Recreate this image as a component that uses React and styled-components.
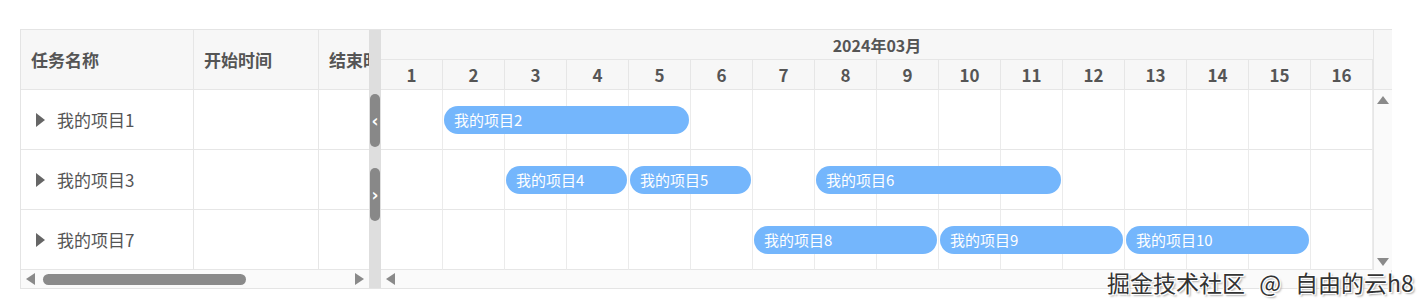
import React from "react";
import styled, { createGlobalStyle } from "styled-components";

const DAY_W = 62;
const DAYS = Array.from({ length: 16 }, (_, i) => i + 1);

const rows = [
    {
        name: "我的项目1",
        bars: [{ title: "我的项目2", start: 2, end: 5 }],
    },
    {
        name: "我的项目3",
        bars: [
            { title: "我的项目4", start: 3, end: 4 },
            { title: "我的项目5", start: 5, end: 6 },
            { title: "我的项目6", start: 8, end: 11 },
        ],
    },
    {
        name: "我的项目7",
        bars: [
            { title: "我的项目8", start: 7, end: 9 },
            { title: "我的项目9", start: 10, end: 12 },
            { title: "我的项目10", start: 13, end: 15 },
        ],
    },
];

const GlobalStyle = createGlobalStyle`
    body {
        margin: 0;
        background: #ffffff;
        font-family: "Noto Sans CJK SC", "Noto Sans", sans-serif;
    }
`;

export default function App() {
    return (
        <>
            <GlobalStyle />
            <Page>
                <Gantt>
                    <TablePanel>
                        <TableGrid>
                            <HeadCell>任务名称</HeadCell>
                            <HeadCell>开始时间</HeadCell>
                            <HeadCell>结束时间</HeadCell>
                            {rows.map((row) => (
                                <React.Fragment key={row.name}>
                                    <Cell>
                                        <Caret />
                                        {row.name}
                                    </Cell>
                                    <Cell />
                                    <Cell />
                                </React.Fragment>
                            ))}
                        </TableGrid>
                        <HScroll>
                            <ArrowLeft />
                            <Thumb />
                            <ArrowRight />
                        </HScroll>
                    </TablePanel>

                    <Splitter>
                        <Handle>‹</Handle>
                        <Handle>›</Handle>
                    </Splitter>

                    <ChartPanel>
                        <ChartTop>
                            <Timeline>
                                <MonthRow>2024年03月</MonthRow>
                                <DayRow>
                                    {DAYS.map((d) => (
                                        <DayCell key={d}>{d}</DayCell>
                                    ))}
                                </DayRow>
                                {rows.map((row) => (
                                    <BarRow key={row.name}>
                                        {DAYS.map((d) => (
                                            <GridCell key={d} />
                                        ))}
                                        {row.bars.map((bar) => (
                                            <Bar
                                                key={bar.title}
                                                style={{
                                                    left: (bar.start - 1) * DAY_W + 1,
                                                    width: (bar.end - bar.start + 1) * DAY_W - 3,
                                                }}
                                            >
                                                {bar.title}
                                            </Bar>
                                        ))}
                                    </BarRow>
                                ))}
                            </Timeline>
                            <VScroll>
                                <VScrollHead />
                                <VScrollTrack>
                                    <ArrowUp />
                                    <ArrowDown />
                                </VScrollTrack>
                            </VScroll>
                        </ChartTop>
                        <HScroll>
                            <ArrowLeft />
                        </HScroll>
                    </ChartPanel>
                </Gantt>
                <Watermark>掘金技术社区 @ 自由的云h8</Watermark>
            </Page>
        </>
    );
}

const Page = styled.div`
    position: relative;
    width: 1421px;
    height: 307px;
    padding: 29px 0 0 20px;
    box-sizing: border-box;
    overflow: hidden;
`;

const Gantt = styled.div`
    display: flex;
    width: 1372px;
    border: 1px solid #e4e4e4;
    box-sizing: border-box;
`;

const TablePanel = styled.div`
    width: 348px;
    display: flex;
    flex-direction: column;
    overflow: hidden;
`;

const TableGrid = styled.div`
    display: grid;
    grid-template-columns: 173px 125px 120px;
    grid-auto-rows: 60px;
`;

const HeadCell = styled.div`
    display: flex;
    align-items: center;
    padding-left: 10px;
    background: #f7f7f7;
    border-right: 1px solid #e6e6e6;
    border-bottom: 1px solid #e6e6e6;
    font-size: 17px;
    font-weight: 700;
    color: #555555;
    white-space: nowrap;
    box-sizing: border-box;
`;

const Cell = styled.div`
    display: flex;
    align-items: center;
    padding-left: 15px;
    border-right: 1px solid #e6e6e6;
    border-bottom: 1px solid #e6e6e6;
    font-size: 17px;
    color: #555555;
    white-space: nowrap;
    box-sizing: border-box;
`;

const Caret = styled.span`
    width: 0;
    height: 0;
    border-top: 7px solid transparent;
    border-bottom: 7px solid transparent;
    border-left: 9px solid #666666;
    margin-right: 12px;
`;

const HScroll = styled.div`
    display: flex;
    align-items: center;
    height: 18px;
    padding: 0 5px;
    background: #fafafa;
    box-sizing: border-box;
`;

const ArrowLeft = styled.span`
    width: 0;
    height: 0;
    border-top: 6px solid transparent;
    border-bottom: 6px solid transparent;
    border-right: 9px solid #8a8a8a;
`;

const ArrowRight = styled.span`
    width: 0;
    height: 0;
    border-top: 6px solid transparent;
    border-bottom: 6px solid transparent;
    border-left: 9px solid #8a8a8a;
    margin-left: auto;
`;

const Thumb = styled.span`
    width: 203px;
    height: 11px;
    margin-left: 8px;
    border-radius: 6px;
    background: #8a8a8a;
`;

const Splitter = styled.div`
    width: 12px;
    flex-shrink: 0;
    background: #dedede;
    display: flex;
    flex-direction: column;
    align-items: center;
    padding-top: 64px;
    gap: 21px;
    box-sizing: border-box;
`;

const Handle = styled.div`
    width: 10px;
    height: 53px;
    border-radius: 5px;
    background: #888888;
    color: #ffffff;
    font-size: 17px;
    font-weight: 700;
    font-family: "DejaVu Sans", sans-serif;
    display: flex;
    align-items: center;
    justify-content: center;
`;

const ChartPanel = styled.div`
    flex: 1;
    display: flex;
    flex-direction: column;
    min-width: 0;
`;

const ChartTop = styled.div`
    display: flex;
`;

const Timeline = styled.div`
    width: ${DAY_W * 16}px;
    flex-shrink: 0;
`;

const MonthRow = styled.div`
    height: 29px;
    display: flex;
    align-items: center;
    justify-content: center;
    background: #f7f7f7;
    border-bottom: 1px solid #e6e6e6;
    font-size: 16px;
    font-weight: 700;
    color: #555555;
`;

const DayRow = styled.div`
    display: grid;
    grid-template-columns: repeat(16, ${DAY_W}px);
    height: 30px;
    background: #f7f7f7;
`;

const DayCell = styled.div`
    display: flex;
    align-items: center;
    justify-content: center;
    border-right: 1px solid #e6e6e6;
    border-bottom: 1px solid #e6e6e6;
    font-size: 17px;
    font-weight: 700;
    color: #555555;
    box-sizing: border-box;
`;

const BarRow = styled.div`
    position: relative;
    display: grid;
    grid-template-columns: repeat(16, ${DAY_W}px);
    height: 60px;
`;

const GridCell = styled.div`
    border-right: 1px solid #ebebeb;
    border-bottom: 1px solid #e6e6e6;
    box-sizing: border-box;
`;

const Bar = styled.div`
    position: absolute;
    top: 16px;
    height: 28px;
    border-radius: 14px;
    background: #74b6fc;
    color: #ffffff;
    font-size: 15px;
    line-height: 28px;
    padding-left: 10px;
    box-sizing: border-box;
    white-space: nowrap;
    overflow: hidden;
`;

const VScroll = styled.div`
    width: 18px;
    flex-shrink: 0;
    display: flex;
    flex-direction: column;
    border-left: 1px solid #e6e6e6;
`;

const VScrollHead = styled.div`
    height: 59px;
    background: #f7f7f7;
    border-bottom: 1px solid #e6e6e6;
`;

const VScrollTrack = styled.div`
    flex: 1;
    display: flex;
    flex-direction: column;
    justify-content: space-between;
    align-items: center;
    padding: 6px 0 4px;
    background: #fafafa;
`;

const ArrowUp = styled.span`
    width: 0;
    height: 0;
    border-left: 6px solid transparent;
    border-right: 6px solid transparent;
    border-bottom: 8px solid #8a8a8a;
`;

const ArrowDown = styled.span`
    width: 0;
    height: 0;
    border-left: 6px solid transparent;
    border-right: 6px solid transparent;
    border-top: 8px solid #8a8a8a;
`;

const Watermark = styled.div`
    position: absolute;
    left: 1107px;
    top: 265px;
    font-size: 23px;
    word-spacing: 9px;
    color: #333333;
    white-space: nowrap;
    text-shadow: 1px 1px 0 #ffffff, -1px -1px 0 #ffffff, 1px -1px 0 #ffffff,
        -1px 1px 0 #ffffff, 2px 2px 2px #aaaaaa;
`;
